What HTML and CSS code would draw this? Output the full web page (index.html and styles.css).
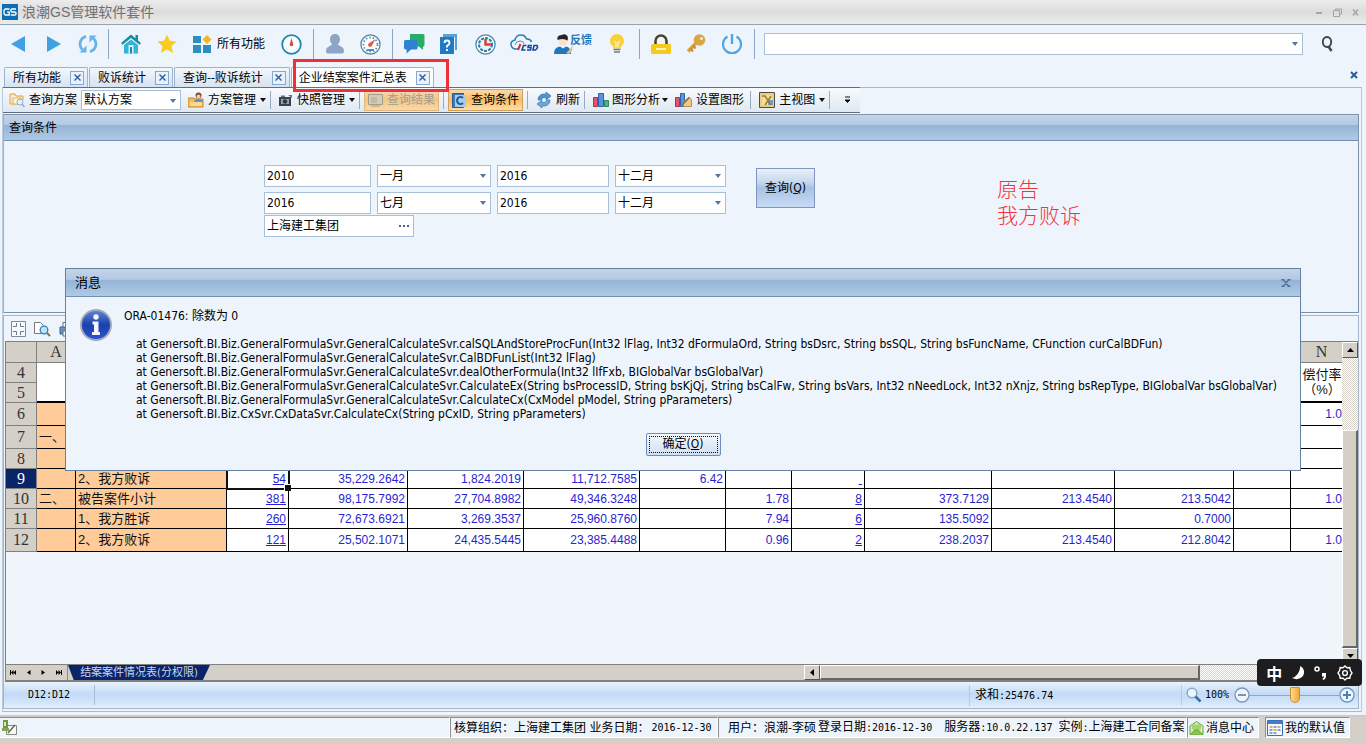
FILE: index.html
```html
<!DOCTYPE html>
<html lang="zh-CN">
<head>
<meta charset="utf-8">
<title>浪潮GS管理软件套件</title>
<link rel="stylesheet" href="styles.css">
</head>
<body>
<header class="titlebar">
  <svg class="logo" width="16" height="16" viewBox="0 0 16 16"><rect width="16" height="16" fill="#0c6fb5"/><path d="M7.500 5H3.200L2 6.200v3.600L3.200 11H7.200V8.200H5M14 5H9.800L8.800 6v1.200L9.800 8H13l1 .9v1.200l-1 .9H8.800" fill="none" stroke="#fff" stroke-width="1.300"/></svg>
  <h1 class="app-name">浪潮GS管理软件套件</h1>
  <div class="win-buttons">
    <button class="plain" aria-label="最小化"><svg width="9" height="9" viewBox="0 0 9 9"><path d="M1 5h6" stroke="#a4a4a4" stroke-width="2"/></svg></button>
    <button class="plain" aria-label="还原"><svg width="9" height="9" viewBox="0 0 9 9"><path d="M2.500 2.500V1h6v5H7M.5 2.500h6v6h-6z" fill="none" stroke="#a4a4a4"/></svg></button>
    <button class="plain" aria-label="关闭"><svg width="9" height="9" viewBox="0 0 9 9"><path d="M2 1.500l5 6M7 1.500l-5 6" stroke="#a4a4a4" stroke-width="1.500"/></svg></button>
  </div>
</header>

<nav class="mainbar">
  <button class="ib w36" aria-label="后退"><svg width="16" height="18" viewBox="0 0 16 18"><path d="M15 1v16L1 9z" fill="#3fa0e2"/></svg></button>
  <button class="ib w36" aria-label="前进"><svg width="16" height="18" viewBox="0 0 16 18"><path d="M1 1v16l14-8z" fill="#3fa0e2"/></svg></button>
  <button class="ib w32" aria-label="刷新"><svg width="20" height="20" viewBox="0 0 20 20"><g fill="none" stroke="#6ab3e6" stroke-width="2.800"><path d="M8 2.300A8 8 0 0 0 4.500 15.800"/><path d="M12 17.700A8 8 0 0 0 15.500 4.200"/></g><path d="M1.500 18.500h7v-7zM18.500 1.500h-7v7z" fill="#6ab3e6"/></svg></button>
  <i class="sep"></i>
  <button class="ib w36" aria-label="主页"><svg width="20" height="20" viewBox="0 0 20 20"><path d="M10 .5L0 9l1.500 1.800L10 4l8.500 6.800L20 9l-3-2.600V1h-2.500v3.300z" fill="#12929c"/><path d="M3 11l7-5.500L17 11v8.500H3z" fill="#35b3d8"/><path d="M7.500 19.500V11h5v8.500z" fill="#dff4fa"/><path d="M9 19.500V13h2v6.500z" fill="#12929c"/></svg></button>
  <button class="ib w36" aria-label="收藏"><svg width="20" height="20" viewBox="0 0 20 20"><path d="M10 .5l2.800 6.300 6.900.7-5.200 4.600 1.500 6.800-6-3.500-6 3.500 1.500-6.800L.3 7.500l6.900-.7z" fill="#f8cb1d"/></svg></button>
  <button class="ib w88" id="all"><svg width="19" height="19" viewBox="0 0 19 19"><g fill="#2c8fc0"><path d="M0 1h8v7H0zM0 10h8v8H0zM10 10h8v8h-8z"/></g><path d="M14 0l4.500 4.500L14 9 9.500 4.500z" fill="#f5b61c"/></svg><span>所有功能</span></button>
  <button class="ib w36" aria-label="时间"><svg width="21" height="21" viewBox="0 0 21 21"><circle cx="10.500" cy="10.500" r="9.300" fill="#f8fcff" stroke="#1f88a8" stroke-width="1.800"/><path d="M10.500 4l1.800 6.500a1.800 1.800 0 1 1-3.600 0z" fill="#e0483a"/></svg></button>
  <i class="sep"></i>
  <button class="ib w34" aria-label="用户"><svg width="20" height="20" viewBox="0 0 20 20"><path d="M10 0c3.500 0 5 2.500 5 5.500 0 2-1 3.500-2 5 1 1.500 6 2 6 6.500 0 2-1 2.500-3 2.500H4c-2 0-3-.5-3-2.500 0-4.500 5-5 6-6.500-1-1.500-2-3-2-5C5 2.500 6.500 0 10 0z" fill="#8da6c6"/></svg></button>
  <button class="ib w36" aria-label="仪表"><svg width="21" height="21" viewBox="0 0 21 21"><circle cx="10.500" cy="10.500" r="9.600" fill="#fafdff" stroke="#527f9d" stroke-width="1.200"/><circle cx="10.500" cy="10.500" r="7" fill="none" stroke="#4b92b6" stroke-width="1.800" stroke-dasharray="1.500 2"/><path d="M15.500 5l-3.500 6.500a2 2 0 1 1-2.500-2.500z" fill="#e25a40"/><path d="M7 16h7" stroke="#4b92b6" stroke-width="2"/></svg></button>
  <i class="sep"></i>
  <button class="ib w34" aria-label="消息"><svg width="21" height="20" viewBox="0 0 21 20"><path d="M6 0h13q1.500 0 1.500 1.500V11q0 1.500-1.500 1.500V16l-4-3.500H6z" fill="#27ad68"/><path d="M1.500 6H12q1.500 0 1.500 1.500V14q0 1.500-1.500 1.500H7L2.500 19.500v-4Q0 15.500 0 14V7.500Q0 6 1.500 6z" fill="#2f82d2"/></svg></button>
  <button class="ib w36" aria-label="帮助"><svg width="18" height="20" viewBox="0 0 18 20"><path d="M3 0h14v16h-2V3H3z" fill="#5a9fd8"/><path d="M0 3h14v17H0z" fill="#1e7cc4"/><path d="M4.500 9q0-2.500 2.500-2.500T9.500 9Q9.500 10.500 7 12v1.500M7 15v2" fill="none" stroke="#fff" stroke-width="1.900"/></svg></button>
  <button class="ib w36" aria-label="计划"><svg width="21" height="21" viewBox="0 0 21 21"><circle cx="10.500" cy="10.500" r="9.600" fill="#fff" stroke="#4d87a6" stroke-width="1.300"/><circle cx="10.500" cy="10.500" r="6.500" fill="#eaf5fb" stroke="#287ca5" stroke-width="2" stroke-dasharray="3 1.200"/><path d="M10.500 5v5.500H16" fill="none" stroke="#dc3f30" stroke-width="2.500"/></svg></button>
  <button class="ib w44" aria-label="iCSD"><svg width="30" height="20" viewBox="0 0 30 20"><path d="M8 15H5Q1 14 1 10q0-3 4-4 1-5 6-5 4 0 5.500 4 4-.5 5 3" fill="none" stroke="#2d7db5" stroke-width="1.500"/><path d="M5 11q1-4 5-4t4 3" fill="none" stroke="#4996c5"/><path d="M10.500 10L8 16" stroke="#d42f38" stroke-width="2"/><g fill="none" stroke="#174b9e" stroke-width="1.600"><path d="M16.500 11.500h-3L12 16h3.500M22 11.500h-3.500l-.5 2h3l-.5 2.500H17M24 11.500h3q1.500 2-1.500 4.500H23z"/></g></svg></button>
  <button class="ib w52" aria-label="反馈"><svg width="20" height="20" viewBox="0 0 20 20"><circle cx="9" cy="7" r="4.500" fill="#fbe0c8"/><path d="M3.500 6Q2.500 1 8 1q2-1.500 5 .5 1.500 2 .5 5Q10 4 5 5.500z" fill="#242424"/><path d="M0 20q0-7 6-7.500l3 2 3-2q5 1 5 7.500z" fill="#1f78bd"/><path d="M12 19l5-5 2-4-1 7-3 3z" fill="#d8bd8c"/></svg><b class="fb">反馈</b></button>
  <button class="ib w36" aria-label="提示"><svg width="16" height="20" viewBox="0 0 16 20"><path d="M8 0a7 7 0 0 1 7 7c0 4-3.500 5-3.500 7.500h-7C4.500 12 1 11 1 7a7 7 0 0 1 7-7z" fill="#f9cf3a"/><path d="M5 7l2 1.500v5M11 7L9 8.500v5" fill="none" stroke="#fff1a8" stroke-width="1.500"/><path d="M4.500 15.500h7M5 18h6" stroke="#6f7a83" stroke-width="1.700"/></svg></button>
  <i class="sep"></i>
  <button class="ib w34" aria-label="锁定"><svg width="20" height="20" viewBox="0 0 20 20"><path d="M4.500 11V7a5.500 5.500 0 0 1 11 0v4" fill="none" stroke="#4b4530" stroke-width="2.600"/><rect y="10" width="20" height="10" rx="1.500" fill="#f7c919"/><path d="M5 15h10" stroke="#fff3c0" stroke-width="2"/></svg></button>
  <button class="ib w36" aria-label="密钥"><svg width="20" height="20" viewBox="0 0 20 20"><circle cx="13.500" cy="6" r="5.800" fill="#d9a643"/><circle cx="15.500" cy="4.500" r="1.500" fill="#f7edd2"/><path d="M10 9l-8 8.500" stroke="#d9a643" stroke-width="3.500"/><path d="M4 14l3 3.500M7 11.500l2.500 3" stroke="#c48f35" stroke-width="2"/></svg></button>
  <button class="ib w36" aria-label="退出"><svg width="20" height="20" viewBox="0 0 20 20"><path d="M5.500 2.500a9 9 0 1 0 9 0" fill="none" stroke="#52a5e0" stroke-width="2.200"/><path d="M10 0v10" stroke="#52a5e0" stroke-width="2.400"/></svg></button>
  <i class="sep"></i>
  <div class="combo search"><input type="text" aria-label="搜索"></div>
  <button class="ib w48" aria-label="查找"><svg width="14" height="16" viewBox="0 0 14 16"><ellipse cx="7" cy="6" rx="4.200" ry="5" fill="none" stroke="#3e434a" stroke-width="1.900"/><path d="M8.500 10.500l3 4.500" stroke="#3e434a" stroke-width="2.400"/></svg></button>
  <i class="tail"></i>
</nav>

<div class="tabs">
  <div class="tab"><a href="#all">所有功能</a><button class="tab-x" aria-label="关闭"><svg width="7" height="7" viewBox="0 0 7 7"><path d="M.5.5l6 6M6.500.5l-6 6" stroke="#2c5c9c" stroke-width="1.400"/></svg></button></div>
  <div class="tab"><a href="#all">败诉统计</a><button class="tab-x" aria-label="关闭"><svg width="7" height="7" viewBox="0 0 7 7"><path d="M.5.5l6 6M6.500.5l-6 6" stroke="#2c5c9c" stroke-width="1.400"/></svg></button></div>
  <div class="tab"><a href="#all">查询--败诉统计</a><button class="tab-x" aria-label="关闭"><svg width="7" height="7" viewBox="0 0 7 7"><path d="M.5.5l6 6M6.500.5l-6 6" stroke="#2c5c9c" stroke-width="1.400"/></svg></button></div>
  <div class="tab current"><a href="#all">企业结案案件汇总表</a><button class="tab-x" aria-label="关闭"><svg width="7" height="7" viewBox="0 0 7 7"><path d="M.5.5l6 6M6.500.5l-6 6" stroke="#2c5c9c" stroke-width="1.400"/></svg></button><span class="marker"></span></div>
  <button class="plain close-all" aria-label="关闭全部"><svg width="8" height="8" viewBox="0 0 8 8"><path d="M1 1l6 6M7 1L1 7" stroke="#2c5c9c" stroke-width="2"/></svg></button>
</div>

<main class="frame">
  <div class="toolbar">
    <label class="tb" for="plan"><svg width="16" height="16" viewBox="0 0 16 16"><path d="M1 2h5l1 2h7v4M1 2v10h8" fill="#fbe6b8" stroke="#dfa44c"/><path d="M4 6h8v6H4z" fill="#fff3d6" stroke="#e5b264"/><circle cx="11" cy="10" r="3" fill="#dff0fb" stroke="#8fb6d6"/><path d="M13 12l2.500 3" stroke="#8fa9c4" stroke-width="1.500"/></svg>查询方案</label>
    <div class="combo plan"><select id="plan"><option>默认方案</option></select></div>
    <button class="tb mg"><svg width="16" height="16" viewBox="0 0 16 16"><path d="M0 6h6l1 1h8v8H0z" fill="#f3bd56" stroke="#c98a2c"/><circle cx="10.500" cy="3.500" r="3" fill="#7b4c32"/><circle cx="10.500" cy="4.500" r="2" fill="#f3cba6"/><path d="M6 10q0-3 4.500-3t4.500 3z" fill="#6b8fd4"/><path d="M2 10h12v4H2z" fill="#fbd98e"/></svg>方案管理<i class="car"></i></button>
    <i class="ts"></i>
    <button class="tb mg"><svg width="14" height="14" viewBox="0 0 14 14"><path d="M0 4h12v9H0z" fill="#39434c"/><path d="M2 2.500h4V4H2zM9 2h4v3" fill="#68747e"/><path d="M2 6h8v5H2z" fill="#91a5ae"/><circle cx="6" cy="8.500" r="2.200" fill="#2c3940"/></svg>快照管理<i class="car"></i></button>
    <i class="ts"></i>
    <button class="tb hot off" disabled><svg width="15" height="15" viewBox="0 0 15 15"><path d="M.5 1.500h14v10H.5z" fill="#d6cdb8" stroke="#a49b89"/><path d="M3 4h6v6H3z" fill="#c4baa3"/><path d="M3 13h9" stroke="#a49b89"/></svg>查询结果</button>
    <i class="ts"></i>
    <button class="tb hot"><svg width="15" height="15" viewBox="0 0 15 15"><path d="M.5.5h11v14H.5z" fill="#3b7bc0" stroke="#2a5a94"/><path d="M3 2h11v12H3z" fill="#a8cbe8"/><path d="M11 5a3.500 3.500 0 1 0 0 5" fill="none" stroke="#1f5a9e" stroke-width="2"/></svg>查询条件</button>
    <i class="ts"></i>
    <button class="tb mg"><svg width="16" height="16" viewBox="0 0 16 16"><path d="M2 8q0-5 5-6h3V0l5 4-5 4V5.500Q6 5 5 8z" fill="#4f93cf" stroke="#2c6ba8" stroke-width=".6"/><path d="M14 8q0 5-5 6H6v2l-5-4 5-4v2.500q4 .5 5-2.500z" fill="#67a8dd" stroke="#2c6ba8" stroke-width=".6"/></svg>刷新</button>
    <i class="ts"></i>
    <button class="tb tight"><svg width="17" height="16" viewBox="0 0 17 16"><path d="M.5 5.500h4v9h-4z" fill="#e2556c" stroke="#b82e48"/><path d="M5.500 1.500h5v13h-5z" fill="#5b93dd" stroke="#2d62ae"/><path d="M11.500 8.500h4v6h-4z" fill="#4fb28a" stroke="#2c8763"/></svg>图形分析<i class="car"></i></button>
    <button class="tb end"><svg width="17" height="16" viewBox="0 0 17 16"><path d="M.5 5.500h4v9h-4z" fill="#e2556c" stroke="#b82e48"/><path d="M5.500 1.500h4v13h-4z" fill="#5b93dd" stroke="#2d62ae"/><path d="M8.500 14.500V10L14 5l2.500 2.500v7z" fill="#ecc98a" stroke="#b98f45"/><path d="M7 13l7-7" stroke="#8a6b3c" stroke-width="1.500"/></svg>设置图形</button>
    <i class="ts"></i>
    <button class="tb mg"><svg width="16" height="16" viewBox="0 0 16 16"><path d="M.5.5h15v15H.5z" fill="#e8cf82" stroke="#4b4b4b"/><path d="M3 3h10v10H3z" fill="#f5df98"/><path d="M9 8h5v5H9z" fill="#6f9dcf"/><path d="M3 4h3l6 9M6 13l6-9" fill="none" stroke="#9c7a33" stroke-width="1.500"/></svg>主视图<i class="car"></i></button>
    <i class="ts"></i>
    <button class="tb more" aria-label="更多"><svg width="7" height="8" viewBox="0 0 7 8"><path d="M1 1h5M1 4h5L3.500 6.500z" fill="#111" stroke="#111"/></svg></button>
  </div>

  <section class="query">
    <h2 class="bar">查询条件</h2>
    <div class="query-body">
      <form class="fields">
        <div class="grid">
          <input class="f" type="text" value="2010" aria-label="起始年">
          <div class="combo"><select aria-label="起始月"><option>一月</option></select></div>
          <input class="f" type="text" value="2016" aria-label="截止年">
          <div class="combo"><select aria-label="截止月"><option>十二月</option></select></div>
          <input class="f" type="text" value="2016" aria-label="起始年二">
          <div class="combo"><select aria-label="起始月二"><option>七月</option></select></div>
          <input class="f" type="text" value="2016" aria-label="截止年二">
          <div class="combo"><select aria-label="截止月二"><option>十二月</option></select></div>
        </div>
        <div class="lookup"><input type="text" value="上海建工集团" aria-label="单位"><button type="button" class="plain" aria-label="选择"><svg width="12" height="3" viewBox="0 0 12 3"><path d="M0 0h2v2H0zM4 0h2v2H4zM8 0h2v2H8z" fill="#3f64a0"/></svg></button></div>
      </form>
      <button class="go">查询(<u>Q</u>)</button>
      <p class="note">原告<br>我方败诉</p>
    </div>
  </section>

  <section class="sheet">
    <div class="sheet-tools">
      <svg width="15" height="16" viewBox="0 0 15 16"><path d="M.5.5h14v15H.5z" fill="#f6fafd" stroke="#7d8b9a"/><path d="M5.500 2v3.500H2M9.500 2v3.500H13M5.500 14v-3.500H2M9.500 14v-3.500H13" fill="none" stroke="#6a7c8e"/></svg>
      <svg width="17" height="16" viewBox="0 0 17 16"><path d="M.5 1.500h6l3 3v8h-9z" fill="#fff" stroke="#7d7a72"/><circle cx="10" cy="9" r="3.800" fill="#bfe4fa" stroke="#2c80bd" stroke-width="1.300"/><path d="M13 12l3 3" stroke="#9a6a35" stroke-width="2"/></svg>
      <svg width="16" height="16" viewBox="0 0 16 16"><path d="M1 6h14v7H1z" fill="#6d93bd" stroke="#3d628c"/><path d="M4 1.500h8V6H4zM4 10h8v5H4z" fill="#fff" stroke="#54708e"/></svg>
    </div>
    <div class="sheet-main">
      <div class="cells">
        <table>
          <colgroup><col class="c-h"><col class="c-a"><col class="c-b"><col class="c-d"><col class="c-e"><col class="c-f"><col class="c-f"><col class="c-g"><col class="c-i"><col class="c-j"><col class="c-k"><col class="c-l"><col class="c-m"><col class="c-n"><col class="c-o"></colgroup>
          <tr class="head"><th></th><th>A</th><th></th><th></th><th></th><th></th><th></th><th></th><th></th><th></th><th></th><th></th><th></th><th></th><th>N</th></tr>
          <tr><th>4</th><td colspan="13" rowspan="2" class="thick"></td><td rowspan="2" class="thick title">偿付率<br>（%）</td></tr>
          <tr><th>5</th></tr>
          <tr class="tall"><th>6</th><td class="o"></td><td class="o"></td><td></td><td></td><td></td><td></td><td></td><td></td><td></td><td></td><td></td><td></td><td></td><td class="cut">1.0</td></tr>
          <tr class="tall"><th>7</th><td class="o">一、</td><td class="o"></td><td></td><td></td><td></td><td></td><td></td><td></td><td></td><td></td><td></td><td></td><td></td><td></td></tr>
          <tr><th>8</th><td class="o"></td><td class="o"></td><td></td><td></td><td></td><td></td><td></td><td></td><td></td><td></td><td></td><td></td><td></td><td></td></tr>
          <tr><th class="on">9</th><td class="o"></td><td class="o">2、我方败诉</td><td class="sel"><a href="#all">54</a></td><td>35,229.2642</td><td>1,824.2019</td><td>11,712.7585</td><td>6.42</td><td></td><td><a href="#all">&nbsp;</a></td><td></td><td></td><td></td><td></td><td></td></tr>
          <tr><th>10</th><td class="o">二、</td><td class="o">被告案件小计</td><td><a href="#all">381</a></td><td>98,175.7992</td><td>27,704.8982</td><td>49,346.3248</td><td></td><td>1.78</td><td><a href="#all">8</a></td><td>373.7129</td><td>213.4540</td><td>213.5042</td><td></td><td class="cut">1.0</td></tr>
          <tr><th>11</th><td class="o"></td><td class="o">1、我方胜诉</td><td><a href="#all">260</a></td><td>72,673.6921</td><td>3,269.3537</td><td>25,960.8760</td><td></td><td>7.94</td><td><a href="#all">6</a></td><td>135.5092</td><td></td><td>0.7000</td><td></td><td></td></tr>
          <tr class="tall"><th>12</th><td class="o"></td><td class="o">2、我方败诉</td><td><a href="#all">121</a></td><td>25,502.1071</td><td>24,435.5445</td><td>23,385.4488</td><td></td><td>0.96</td><td><a href="#all">2</a></td><td>238.2037</td><td>213.4540</td><td>212.8042</td><td></td><td class="cut">1.0</td></tr>
        </table>
      </div>
      <div class="vscroll">
        <button class="sb" aria-label="向上"><svg width="7" height="4" viewBox="0 0 7 4"><path d="M0 4h7L3.500 0z"/></svg></button>
        <div class="gap"></div><div class="thumb"></div>
        <button class="sb" aria-label="向下"><svg width="7" height="4" viewBox="0 0 7 4"><path d="M0 0h7L3.500 4z"/></svg></button>
      </div>
    </div>
    <div class="sheet-tabs">
      <div class="steps">
        <button class="plain" aria-label="首页"><svg width="6" height="5" viewBox="0 0 6 5"><path d="M0 0h1v5H0zM3.500 0v5L1 2.500zM6 0v5L3.500 2.500z"/></svg></button>
        <button class="plain" aria-label="上一页"><svg width="4" height="5" viewBox="0 0 4 5"><path d="M3.500 0v5L0 2.500z"/></svg></button>
        <button class="plain" aria-label="下一页"><svg width="4" height="5" viewBox="0 0 4 5"><path d="M.5 0v5L4 2.500z"/></svg></button>
        <button class="plain" aria-label="末页"><svg width="6" height="5" viewBox="0 0 6 5"><path d="M0 0v5l2.500-2.500zM2.500 0v5L5 2.500zM5 0h1v5H5z"/></svg></button>
      </div>
      <button class="sheet-tab">结案案件情况表(分权限)</button>
      <div class="rest"></div>
      <button class="sb" aria-label="向左"><svg width="4" height="7" viewBox="0 0 4 7"><path d="M4 0v7L0 3.500z"/></svg></button>
      <div class="hthumb"></div>
      <div class="gap hgap"></div>
    </div>
    <div class="status">
      <span class="cell-ref mono">D12:D12</span>
      <span class="sum">求和<span class="mono">:25476.74</span></span>
      <div class="zoom">
        <svg width="16" height="16" viewBox="0 0 16 16"><circle cx="6" cy="6" r="4.800" fill="#eaf6ff" stroke="#8aa9c9" stroke-width="1.500"/><path d="M9.500 9.500l5 5" stroke="#3f6fa8" stroke-width="2.600"/></svg>
        <label class="mono" for="zoom">100%</label>
        <button class="plain" aria-label="缩小"><svg width="16" height="16" viewBox="0 0 16 16"><circle cx="8" cy="8" r="7" fill="#eef5fc" stroke="#7c95b5" stroke-width="1.300"/><path d="M4 8h8" stroke="#7c95b5" stroke-width="2"/></svg></button>
        <input id="zoom" type="range" min="0" max="200" value="100">
        <button class="plain" aria-label="放大"><svg width="16" height="16" viewBox="0 0 16 16"><circle cx="8" cy="8" r="7" fill="#eef5fc" stroke="#6d93c2" stroke-width="1.300"/><path d="M4 8h8M8 4v8" stroke="#4d7fbd" stroke-width="2"/></svg></button>
      </div>
    </div>
  </section>
</main>

<footer class="footer">
  <div class="pane first"><svg width="16" height="16" viewBox="0 0 16 16"><path d="M4.500 5.500h10v9h-10z" fill="#f6f9f2" stroke="#868b80"/><path d="M6 13l7-8" stroke="#5f6a58" stroke-width="1.500"/><path d="M1 0h5v10H1z" fill="#6d9a3b"/><path d="M2 2h2v4H2z" fill="#d5e5b8"/><path d="M0 8h7v3H0z" fill="#87a353"/></svg></div>
  <div class="pane p1">核算组织：上海建工集团 业务日期：<span class="mono">2016-12-30</span></div>
  <div class="pane p2"><span>用户：浪潮-李硕</span><span>登录日期<span class="mono">:2016-12-30</span></span><span class="server">服务器<span class="mono">:10.0.22.137</span></span><span>实例<span class="mono">:</span>上海建工合同备案</span></div>
  <button class="pane p3"><svg width="15" height="14" viewBox="0 0 15 14"><path d="M1 5l6.500-4.500L14 5v8.500H1z" fill="#d7ecc0" stroke="#6aa33c"/><path d="M3 3.500h9V8l-4.500 3L3 8z" fill="#a4d36c"/><path d="M1 13.500L6 9h3l5 4.500" fill="#8cc452" stroke="#6aa33c"/></svg>消息中心</button>
  <button class="pane p4"><svg width="16" height="16" viewBox="0 0 16 16"><path d="M.5.5h15v15H.5z" fill="#f5f8fc" stroke="#3c6fb4"/><path d="M1 1h14v3H1z" fill="#3b7fd6"/><g><path d="M2.500 6h3v2h-3zM10.500 6h3v2h-3zM6.500 9h3v2h-3z" fill="#e8b254"/><path d="M6.500 6h3v2h-3zM2.500 9h3v2h-3zM10.500 9h3v2h-3zM2.500 12h3v2h-3zM6.500 12h3v2h-3z" fill="#7fa7d8"/></g></svg>我的默认值</button>
</footer>

<div class="dialog" role="dialog" aria-labelledby="msg">
  <div class="bar dialog-head"><h2 id="msg">消息</h2><button class="plain" aria-label="关闭"><svg width="10" height="8" viewBox="0 0 10 8"><path d="M.5.7h3M6.500.7h3M.5 7.300h3M6.500 7.300h3M2 .5l6 7M8 .5l-6 7" fill="none" stroke="#4e7396" stroke-width="1.400"/></svg></button></div>
  <div class="dialog-body">
    <svg class="info" width="32" height="32" viewBox="0 0 32 32"><defs><linearGradient id="g" x1="0" y1="0" x2="0" y2="1"><stop offset="0" stop-color="#5f86d8"/><stop offset=".5" stop-color="#1b3fae"/><stop offset="1" stop-color="#2b55d2"/></linearGradient></defs><circle cx="16" cy="16" r="15" fill="url(#g)" stroke="#a3a9b8" stroke-width="2"/><circle cx="16" cy="8" r="2.700" fill="#f4f6fa"/><path d="M12.500 12.500h6V23H20v3h-8v-3h2v-7.500h-1.500z" fill="#f4f6fa"/></svg>
    <div class="text">
      <p>ORA-01476: 除数为 0</p>
      <ul>
        <li>at Genersoft.BI.Biz.GeneralFormulaSvr.GeneralCalculateSvr.calSQLAndStoreProcFun(Int32 lFlag, Int32 dFormulaOrd, String bsDsrc, String bsSQL, String bsFuncName, CFunction curCalBDFun)</li>
        <li>at Genersoft.BI.Biz.GeneralFormulaSvr.GeneralCalculateSvr.CalBDFunList(Int32 lFlag)</li>
        <li>at Genersoft.BI.Biz.GeneralFormulaSvr.GeneralCalculateSvr.dealOtherFormula(Int32 lIfFxb, BIGlobalVar bsGlobalVar)</li>
        <li>at Genersoft.BI.Biz.GeneralFormulaSvr.GeneralCalculateSvr.CalculateEx(String bsProcessID, String bsKjQj, String bsCalFw, String bsVars, Int32 nNeedLock, Int32 nXnjz, String bsRepType, BIGlobalVar bsGlobalVar)</li>
        <li>at Genersoft.BI.Biz.GeneralFormulaSvr.GeneralCalculateSvr.CalculateCx(CxModel pModel, String pParameters)</li>
        <li>at Genersoft.BI.Biz.CxSvr.CxDataSvr.CalculateCx(String pCxID, String pParameters)</li>
      </ul>
    </div>
  </div>
  <button class="ok"><span>确定(<u>O</u>)</span></button>
</div>

<div class="ime">
  <span>中</span>
  <svg width="14" height="14" viewBox="0 0 14 14"><path d="M9.500 0Q15 4 12 10 8 15 1 12q7-2 8.500-12z" fill="#fff"/></svg>
  <svg width="14" height="16" viewBox="0 0 14 16"><circle cx="3" cy="4" r="2" fill="none" stroke="#fff" stroke-width="1.500"/><path d="M8 8h4v3q0 3-3 4l-.5-1.500q1.500-.5 1.500-2H8z" fill="#fff"/></svg>
  <svg width="16" height="16" viewBox="0 0 16 16"><path d="M8 1l2 1.800 2.800-.2.500 2.700L15 8l-1.700 2.600-.5 2.700-2.800-.2L8 15l-2-1.900-2.800.2-.5-2.700L1 8l1.700-2.700.5-2.700 2.800.2z" fill="none" stroke="#fff" stroke-width="1.400"/><circle cx="8" cy="8" r="2.400" fill="none" stroke="#fff" stroke-width="1.400"/></svg>
</div>
</body>
</html>
```

FILE: styles.css
```css
* { box-sizing: border-box; }
body {
  margin: 0;
  position: relative;
  min-height: 100vh;
  display: flex;
  flex-direction: column;
  background: #edf4fc;
  color: #000;
  font: 12px/16px "DejaVu Sans Condensed", "Noto Sans CJK SC", sans-serif;
}
h1, h2, p, ul { margin: 0; padding: 0; font-weight: normal; font-size: inherit; }
ul { list-style: none; }
a { color: inherit; text-decoration: none; }
button, input, select { font: inherit; color: inherit; margin: 0; padding: 0; border-radius: 0; }
button, label { white-space: nowrap; }
svg { flex: none; display: block; }
.plain { border: 0; background: none; display: flex; align-items: center; justify-content: center; }
.mono { font-family: "DejaVu Sans Mono", monospace; font-size: 10px; }

.titlebar { height: 25px; display: flex; align-items: center; padding: 0 6px 0 2px; gap: 4px; background: linear-gradient(#ececec, #dcdcdc 50%, #ececec); border-bottom: 1px solid #98a4b2; }
.app-name { flex: 1; font: 14px/20px "Liberation Sans", "Noto Sans CJK SC", sans-serif; color: #707070; }
.win-buttons { display: flex; gap: 9px; }

.mainbar { height: 38px; display: flex; align-items: center; }
.ib { border: 0; background: none; height: 30px; display: flex; align-items: center; justify-content: center; gap: 5px; flex: none; }
.w32 { width: 32px; } .w34 { width: 34px; } .w36 { width: 36px; } .w44 { width: 44px; }
.w48 { width: 48px; } .w52 { width: 52px; gap: 0; } .w88 { width: 88px; }
.sep { flex: none; width: 1px; height: 30px; margin: 0 4px; background: #8ba6c4; }
.fb { font-size: 11px; line-height: 12px; color: #1e74b8; padding-bottom: 6px; margin-left: -4px; }
.combo { position: relative; background: #fff; border: 1px solid #a9bfd8; height: 22px; }
.combo::after { content: ""; position: absolute; right: 4px; top: 8px; border: 3px solid transparent; border-top: 4px solid #55749f; border-bottom: 0; pointer-events: none; }
.combo select, .combo input { appearance: none; border: 0; background: none; width: 100%; height: 100%; padding: 0 2px; outline: 0; display: block; }
.search { flex: 1; margin-left: 5px; }
.tail { width: 15px; }

.tabs { height: 24px; display: flex; align-items: flex-end; gap: 1px; padding: 0 8px 0 4px; }
.tab { position: relative; height: 20px; display: flex; align-items: center; gap: 9px; padding: 0 3px 0 8px; border: 1px solid #9db2cb; border-bottom: 0; border-radius: 2px 2px 0 0; background: linear-gradient(#f2f7fc, #d6e3f1); }
.tab.current { background: #fbfdff; padding-left: 7px; }
.tab-x { width: 14px; height: 14px; border: 1px solid #86a8d2; background: #e9f2fc; display: flex; align-items: center; justify-content: center; }
.marker { position: absolute; left: 1px; top: -9px; width: 156px; height: 33px; border: 3px solid #ee3138; z-index: 2; pointer-events: none; }
.close-all { margin-left: auto; height: 24px; }

.frame { flex: 1; margin: 0 4px 0 2px; border: 1px solid #bccbdc; border-top-color: #a8b8ca; border-bottom-color: #aeb9c6; display: flex; flex-direction: column; }
.toolbar { align-self: flex-start; height: 26px; margin-top: -1px; display: flex; align-items: center; background: linear-gradient(#f7fafd, #dfe8f2); border: 1px solid #646e7d; border-width: 1px 0; padding-left: 2px; }
.tb { border: 0; background: none; height: 24px; display: flex; align-items: center; gap: 4px; padding: 0 4px; }
.mg { padding-left: 7px; }
.tight { gap: 2px; padding: 0 3px 0 4px; }
.end { padding-right: 6px; }
.toolbar .plan { width: 100px; height: 20px; }
.ts { width: 1px; height: 18px; background: #9aabc0; margin: 0 4px 0 0; }
.ts + .mg { padding-left: 4px; }
.car { border: 3px solid transparent; border-top: 4px solid #111; border-bottom: 0; }
.hot { height: 22px; padding: 0 3px; margin-right: 4px; border: 1px solid #d0a060; background: linear-gradient(#fbd9a6, #f9bd68 50%, #fde0a4); }
.off { color: #a79d8d; border-color: #e5b57c; background: linear-gradient(#f3dcbc, #f3c583 50%, #f6dbab); }
.more { width: 26px; justify-content: center; }

.bar { display: flex; align-items: center; background: linear-gradient(#c4d3e7, #b3cae4 38%, #95b4d6 42%, #afcae6); border-bottom: 1px solid #768fae; }
.query { height: 199px; margin: 1px 2px 2px 0; border: 1px solid #7d92ac; border-left-color: #9eb0c6; }
.query .bar { height: 26px; padding-left: 5px; }
.query-body { display: flex; align-items: flex-start; padding: 24px 0 0 260px; }
.grid { display: grid; grid-template-columns: 107px 114px 112px 111px; gap: 5px 6px; }
.f, .lookup { height: 22px; border: 1px solid #a9bfd8; background: #fff; padding: 0 2px; width: 100%; }
.lookup { display: flex; width: 150px; margin-top: 1px; }
.lookup input { flex: 1; min-width: 0; border: 0; background: none; }
.go { width: 59px; height: 40px; margin: 3px 0 0 30px; border: 1px solid #7d97c0; background: linear-gradient(#e8eff9, #c6d7ee 35%, #a7c2e6 50%, #c8dbf4); }
.note { margin: 12px 0 0 182px; font: 300 21px/26px "Liberation Sans", "Noto Sans CJK SC", sans-serif; color: #f0343e; }

.sheet { flex: 1; display: flex; flex-direction: column; margin: 0 2px 2px 0; border: 1px solid #a5b5c8; }
.sheet-tools { height: 25px; display: flex; align-items: center; gap: 8px; padding-left: 7px; }
.sheet-main { flex: 1; display: flex; margin-left: 1px; border: solid #808080; border-width: 1px 0 0 1px; background: #f0f5fc; }
.cells { flex: 1; min-width: 0; overflow: hidden; }
table { width: 1365px; table-layout: fixed; border-collapse: separate; border-spacing: 0; background: #fff; font-family: "Liberation Sans", "Noto Sans CJK SC", sans-serif; }
.c-h { width: 31px; } .c-a { width: 39px; } .c-b { width: 151px; } .c-d { width: 62px; } .c-e { width: 119px; }
.c-f { width: 116px; } .c-g { width: 86px; } .c-i { width: 66px; } .c-j { width: 73px; } .c-k { width: 127px; }
.c-l { width: 123px; } .c-m { width: 119px; } .c-n { width: 57px; } .c-o { width: 80px; }
tr { height: 20px; }
.tall { height: 23px; }
td, th { padding: 0 2px; border: solid #000; border-width: 0 1px 1px 0; line-height: 16px; white-space: nowrap; overflow: hidden; }
td { text-align: right; color: #2a1fd2; }
td a { text-decoration: underline; }
th { background: #d4d0c8; border-color: #808080; font: 16px/18px "Liberation Serif", serif; color: #333; text-align: center; }
.head th:last-child { padding-right: 20px; }
.head { height: 21px; }
.on { background: #0a246a; color: #fff; }
.o { background: #ffcc99; color: #111; text-align: left; font-size: 13px; }
.thick { border-bottom-width: 2px; }
.title { color: #111; text-align: center; font-size: 13px; line-height: 15px; padding: 0 17px 0 0; }
.cut { padding-right: 28px; }
.sel { position: relative; overflow: visible; outline: 2px solid #111; outline-offset: -1px; }
.sel::after { content: ""; position: absolute; right: -3px; bottom: -3px; width: 6px; height: 6px; background: #111; border: 1px solid #fff; border-width: 1px 0 0 1px; }
.vscroll { width: 16px; display: flex; flex-direction: column; }
.sb { width: 16px; height: 16px; flex: none; display: flex; align-items: center; justify-content: center; background: #d4d0c8; border: 1px solid; border-color: #fff #555 #555 #fff; }
.gap { background: repeating-conic-gradient(#fff 0 25%, #d8d4cc 0 50%) 0 0 / 2px 2px; }
.vscroll .gap { height: 72px; }
.thumb { flex: 1; }
.thumb, .hthumb { background: #d4d0c8; border: solid; border-width: 1px 2px 2px 1px; border-color: #fff #666 #666 #fff; }
.sheet-tabs { display: flex; height: 18px; margin-left: 1px; border: solid #808080; border-width: 1px 0 2px 1px; background: #d4d0c8; }
.sheet-tabs .sb { height: 15px; }
.steps { width: 62px; display: flex; justify-content: space-between; padding: 0 5px 0 4px; border-right: 1px solid #888; }
.sheet-tab { width: 142px; border: 0; background: #0a246a; color: #c9d5ec; font-size: 11px; line-height: 15px; clip-path: polygon(0 0, 100% 0, 95% 100%, 4% 100%); }
.rest { flex: 595; }
.hthumb { flex: 378; }
.hgap { flex: 158; }
.status { height: 26px; display: flex; align-items: center; background: linear-gradient(#e8f2fd, #c4dbf5 45%, #cde1f8 70%, #e3effc); }
.cell-ref { width: 91px; padding-left: 24px; border-right: 1px solid #a3bddb; line-height: 20px; }
.sum { margin-left: auto; width: 212px; padding-left: 5px; border-left: 1px solid #b3cae4; line-height: 20px; }
.zoom { width: 177px; display: flex; align-items: center; padding: 0 3px 0 4px; border-left: 1px solid #b3cae4; height: 20px; }
.zoom label { margin: 0 5px 0 3px; }
.zoom input { flex: 1; min-width: 0; height: 18px; appearance: none; background: linear-gradient(#8aa6ca, #8aa6ca) center / 100% 1px no-repeat; }
.zoom input::-webkit-slider-thumb { appearance: none; width: 10px; height: 16px; border: 1px solid #c98b35; border-radius: 1px 1px 5px 5px; background: linear-gradient(90deg, #ffd98f, #f3a83c); }

.footer { height: 29px; margin-top: 3px; display: flex; background: #d4d0c8; border-top: 2px solid #cfcbc4; border-bottom: 6px solid #d4d0c8; padding-right: 16px; }
.pane { border: 1px solid; border-color: #8d8d8d #fff #fff #8d8d8d; background: #edf4fc; display: flex; align-items: center; white-space: pre; gap: 2px; padding: 0 3px; }
.pane.first { flex: 1; border-left: 0; padding: 0 2px; }
.p1 { width: 268px; }
.p2 { width: 469px; gap: 2px; padding-left: 9px; }
.server { padding: 0 4px 0 10px; }
.p3 { width: 72px; }
.p4 { width: 85px; margin-left: 6px; }
.p3, .p4 { padding: 0 1px; }

.dialog { position: absolute; left: 65px; right: 65px; top: 268px; height: 203px; border: 1px solid #66809f; background: #edf4fc; display: flex; flex-direction: column; align-items: center; }
.dialog-head { align-self: stretch; height: 28px; justify-content: space-between; padding: 0 9px; font-size: 13px; }
.dialog-body { align-self: stretch; flex: 1; display: flex; gap: 12px; padding: 12px 0 0 14px; }
.text { line-height: 14px; white-space: nowrap; }
.text ul { margin: 14px 0 0 12px; }
.ok { width: 75px; height: 23px; margin-bottom: 14px; padding: 2px; border: 1px solid #6f8cc0; border-radius: 2px; background: linear-gradient(#f3f8fd, #cfdff2); }
.ok span { display: block; border: 1px dotted #111; line-height: 15px; }

.ime { position: absolute; right: 4px; bottom: 58px; width: 105px; height: 27px; border-radius: 4px; background: #1d1d1f; color: #fff; display: flex; align-items: center; justify-content: space-around; padding: 0 5px; font: bold 16px/20px "Noto Sans CJK SC", sans-serif; }
```
